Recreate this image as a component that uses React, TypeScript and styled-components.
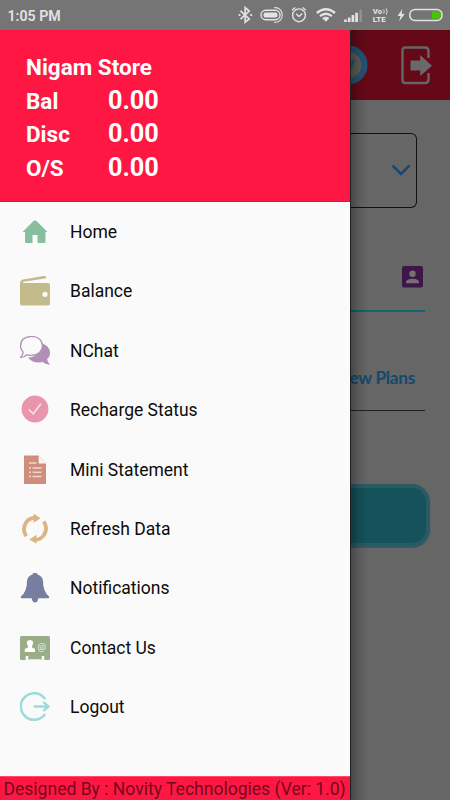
import React from "react";
import styled, { createGlobalStyle } from "styled-components";

const GlobalStyle = createGlobalStyle`
  * { box-sizing: border-box; }
  body { margin: 0; background: #666; font-family: Roboto, "Liberation Sans", sans-serif; }
  svg { display: block; flex: none; }
`;

const Screen = styled.div`
  width: 450px;
  height: 800px;
  overflow: hidden;
  display: grid;
  grid-template-rows: 30px 770px;
`;

const StatusBar = styled.header`
  display: flex;
  justify-content: space-between;
  background: #757575;
  color: #e3e3e3;
  padding-left: 7.5px;
`;

const Clock = styled.time`
  font-size: 14.2px;
  font-weight: 600;
  line-height: 32px;
`;

const Body = styled.div`
  display: grid;
  grid-template-columns: 350px 100px;
`;

const Drawer = styled.aside`
  display: flex;
  flex-direction: column;
  background: #fafafa;
`;

const Account = styled.section`
  height: 172px;
  padding: 20px 26px 0;
  background: #ff1744;
  border-bottom: 1px solid #f80e3c;
  color: #fff;
  font-weight: 700;
`;

const StoreName = styled.div`
  font-size: 22.5px;
  line-height: 34px;
  height: 33.5px;
  white-space: nowrap;
`;

const AmountRow = styled.div`
  display: grid;
  grid-template-columns: 82px 1fr;
  height: 33.5px;
  line-height: 34px;
  font-size: 22.5px;
`;

const Amount = styled.span`
  font-size: 25.3px;
  line-height: 33px;
`;

const Menu = styled.nav`
  flex: 1;
  padding-top: 0.4px;
`;

const MenuItem = styled.a`
  display: grid;
  grid-template-columns: 30px auto;
  column-gap: 20px;
  align-items: center;
  height: 59.4px;
  padding-left: 20px;
  font-size: 17.5px;
  color: #0c0c0c;
`;

const Footer = styled.footer`
  height: 24px;
  padding-left: 3.5px;
  background: #ff1744;
  border-top: 1px solid #ff4a68;
  color: #720a1e;
  font-size: 17.55px;
  line-height: 24px;
  white-space: nowrap;
`;

const Page = styled.main`
  position: relative;
  background: #666;
  overflow: hidden;
`;

const DrawerShadow = styled.div`
  position: absolute;
  inset: 0 auto 0 0;
  width: 18px;
  border-left: 1px solid #1d2326;
  background: linear-gradient(90deg, rgba(0,0,0,.3), rgba(0,0,0,.1) 50%, transparent);
`;

const AppBar = styled.div`
  height: 70px;
  background: #650918;
  display: flex;
  justify-content: space-between;
  align-items: center;
  padding-right: 18px;
`;

const SelectBox = styled.div`
  width: 67px;
  height: 75px;
  margin-top: 32.5px;
  padding-right: 5px;
  border: 1px solid #111;
  border-left: 0;
  border-radius: 0 6px 6px 0;
  display: flex;
  justify-content: flex-end;
  align-items: center;
`;

const NumberField = styled.div`
  width: 75px;
  height: 104.5px;
  padding: 58px 2px 0 0;
  border-bottom: 2px solid #0f666f;
  display: flex;
  justify-content: flex-end;
`;

const PlanField = styled.div`
  width: 75px;
  height: 99px;
  padding: 54px 10px 0 0;
  border-bottom: 1px solid #202020;
  display: flex;
  justify-content: flex-end;
  white-space: nowrap;
  font: 700 17.3px/24px Lato, sans-serif;
  color: #134a6b;
`;

const PlansLabel = styled.span`
  letter-spacing: -0.3px;
`;

const Submit = styled.div`
  width: 80px;
  height: 63px;
  margin-top: 73px;
  background: #15525a;
  border: 4px solid #295b67;
  border-left: 0;
  border-radius: 0 18px 18px 0;
  box-shadow: 0 1px 1px rgba(0,0,0,.2);
`;

const StatusIcons = () => (
  <svg width="220" height="30" viewBox="230 0 220 30" fill="none" stroke="#e3e3e3" strokeWidth="1.4">
    <path d="M240.500 10.800l8.700 8.200-4 3.300V7.600l4 3.400-8.700 8.200" strokeWidth="1.700" />
    <path d="M239.500 15h.1m11.500 0h.1" strokeWidth="2.200" strokeLinecap="round" />
    <rect x="261" y="10.300" width="19" height="9.400" rx="4.700" />
    <rect x="263.500" y="12.500" width="14" height="5" rx="2" fill="#e3e3e3" stroke="none" />
    <path d="M274 7.700c11-1.500 11 16.200 0 14.500" strokeWidth="1.100" />
    <circle cx="299" cy="15.300" r="6.400" />
    <path d="M296 13.700l3 2.800 3.200-3.100M292 10.300l3.300-2.800m7.300 0 3.300 2.800" />
    <g strokeWidth="2.300">
      <path d="M316.800 13q9.100-7.400 18.200 0" />
      <path d="M320 16.200q5.900-4.800 11.800 0" />
      <path d="M323 19q2.800-2 5.600 0" />
    </g>
    <circle cx="325.900" cy="20.100" r="1.400" fill="#e3e3e3" stroke="none" />
    <path d="M345.500 22v-2.500m3.700 2.500v-4.500m3.700 4.500v-7m3.700 7v-9.200" strokeWidth="2.700" />
    <path d="M360.700 22V9.500" strokeWidth="2.500" stroke="#929292" />
    <g fill="#e3e3e3" stroke="none" fontFamily="Roboto, sans-serif" fontWeight="800">
      <text x="372.700" y="14" fontSize="7.900" letterSpacing=".1">Vo</text>
      <text x="372.700" y="22" fontSize="7.900" letterSpacing=".1">LTE</text>
    </g>
    <path d="M383.700 9.500q1.200 2 0 4m2.500-5q2 3 0 6" strokeWidth="1" />
    <path d="M402.400 9l-4.900 7h3l-1.300 5.600 5.500-7.800h-3.100z" fill="#e3e3e3" stroke="none" />
    <path d="M432 11.300h6.500q2.400 0 2.400 3.700t-2.400 3.700H432z" fill="#46c404" stroke="none" />
    <rect x="409.800" y="9.600" width="32.200" height="10.800" rx="5" strokeWidth="1.500" />
  </svg>
);

const HomeIcon = () => (
  <svg width="30" height="30" viewBox="0 0 30 30" fill="#88bd9e">
    <path d="M15 3.400Q16 3.400 17 4.500L27.500 15H25.500v9.500q0 1.500-1.500 1.500H17.500v-8h-5v8H6.500Q5 26 5 24.500V15H2.500L13 4.500Q14 3.400 15 3.400z" />
  </svg>
);

const WalletIcon = () => (
  <svg width="30" height="30" viewBox="0 0 30 30" fill="#c3bb8b">
    <path d="M0 8Q0 4.200 3 3.500L24.500-.2Q26-.2 26.200 2.200L4 5.800Q2.300 6.300 3 7H28q2 0 2 2v18.500q0 2-2 2H2q-2 0-2-2z" />
    <circle cx="25" cy="18.300" r="2.600" fill="#fafafa" />
  </svg>
);

const ChatIcon = () => (
  <svg width="30" height="30" viewBox="0 0 30 30">
    <path d="M22 7.500q8 2.500 8 9.500 0 4-3 6 .3 3 3 5.300-4 .7-7.300-2.200Q13 28 8 21.500 20 21 22 7.500z" fill="#b28fb6" />
    <path d="M10.500.5C26.500-.5 26.500 20 10.500 19.300q-2 0-3.700-.6-3 2.900-6.300 2.700 2.300-2.300 2.700-5.300Q.5 13.500.5 10 .5 1.200 10.500.5z" fill="#fafafa" stroke="#b28fb6" strokeWidth="1.300" />
  </svg>
);

const CheckIcon = () => (
  <svg width="30" height="30" viewBox="0 0 30 30">
    <circle cx="15" cy="14" r="13.400" fill="#e995ad" />
    <path d="M8.800 14.500l4.400 4.300 7.700-10" fill="none" stroke="#fbe3ea" strokeWidth="1.500" />
  </svg>
);

const StatementIcon = () => (
  <svg width="30" height="30" viewBox="0 0 30 30">
    <path d="M4 .5h14.500l7.500 8V29H4z" fill="#cf8d7e" />
    <path d="M18.700.7V8.500H26z" fill="#fff3f0" />
    <path d="M9 8h7.500M9 13h2m1.500 0h9M9 17.200h2m1.500 0h9M9 21.500h2m1.500 0h9" stroke="#f2d4cc" strokeWidth="1.600" />
  </svg>
);

const RefreshIcon = () => (
  <svg width="30" height="30" viewBox="0 0 30 30" fill="none" stroke="#dcb385" strokeWidth="3.800">
    <path d="M6.300 22.200Q1.600 15.500 6.200 8.200 9.700 3.800 15 3.900M23.700 7.500Q28.400 14 24 21q-3.500 4.800-9 4.800" />
    <path d="M13.500-.5l7.200 4.800-7.200 4.400zM16.500 20.800l-7.200 4.800 7.200 4.200z" fill="#dcb385" stroke="none" />
  </svg>
);

const BellIcon = () => (
  <svg width="30" height="30" viewBox="0 0 30 30" fill="#777e9f">
    <path d="M12.500 1.500Q13-.3 15-.3t2.500 1.800q5 1.500 5.500 6.500 0 10.500 6 15.500.5 1.800-.5 1.800H18.200q-.5 4.300-3.200 4.300t-3.200-4.300H1.500q-1 0-.5-1.800Q7 18.500 7 8q.5-5 5.500-6.500z" />
  </svg>
);

const ContactIcon = () => (
  <svg width="30" height="30" viewBox="0 0 30 30">
    <rect y="3" width="30" height="24" rx="1.500" fill="#9aad87" />
    <path d="M10 7c3.300 0 3.500 3 2.600 5q-.8 1.200-.8 2.300l3.200 1.600V19H4.800v-3.100L8.200 14.300q0-1.100-.8-2.300C6.400 10 6.700 7 10 7z" fill="#fff" />
    <text x="17.500" y="16.600" fontFamily="Roboto, sans-serif" fontSize="9.500" fill="#edf2e6">@</text>
    <path d="M7 23v4m16-4v4" stroke="#fff" strokeWidth="2.600" />
    <path d="M9 26.500h12" stroke="#dfe6d8" strokeWidth="1" />
  </svg>
);

const LogoutIcon = () => (
  <svg width="30" height="30" viewBox="0 0 30 30" fill="none" stroke="#9bdcdb" strokeWidth="2.500" strokeLinecap="round">
    <path d="M24.500 6.200A13.300 13.300 0 1 0 24.500 22.800" />
    <path d="M14.500 14.500H28m-4-3.800 4.400 3.800-4.400 3.800" strokeWidth="2.300" />
  </svg>
);

const VerifiedIcon = () => (
  <svg width="19" height="42" viewBox="0 0 19 42">
    <circle cx="-2" cy="21" r="16.500" fill="#5d5d59" stroke="#255475" strokeWidth="6" />
    <path d="M-5 21l4 5L4 16" fill="none" stroke="#255475" strokeWidth="3" />
  </svg>
);

const ExitIcon = () => (
  <svg width="32" height="40" viewBox="0 0 32 40">
    <path d="M28.500 13V6q0-3.500-3.500-3.500H5Q2.500 2.500 2.500 6v29q0 3 2.500 3h20q3.500 0 3.500-3.500V28" fill="none" stroke="#666" strokeWidth="2.400" />
    <path d="M10.500 15.500h9.700V10L32 20.700 20.200 31v-5.500h-9.700z" fill="#696969" />
  </svg>
);

const items = [
  { label: "Home", Icon: HomeIcon },
  { label: "Balance", Icon: WalletIcon },
  { label: "NChat", Icon: ChatIcon },
  { label: "Recharge Status", Icon: CheckIcon },
  { label: "Mini Statement", Icon: StatementIcon },
  { label: "Refresh Data", Icon: RefreshIcon },
  { label: "Notifications", Icon: BellIcon },
  { label: "Contact Us", Icon: ContactIcon },
  { label: "Logout", Icon: LogoutIcon },
];

export default function App() {
  return (
    <Screen>
      <GlobalStyle />
      <StatusBar>
        <Clock>1:05 PM</Clock>
        <StatusIcons />
      </StatusBar>
      <Body>
        <Drawer>
          <Account>
            <StoreName>Nigam Store</StoreName>
            {["Bal", "Disc", "O/S"].map((name) => (
              <AmountRow key={name}>
                <span>{name}</span>
                <Amount>0.00</Amount>
              </AmountRow>
            ))}
          </Account>
          <Menu>
            {items.map(({ label, Icon }) => (
              <MenuItem key={label}>
                <Icon />
                <span>{label}</span>
              </MenuItem>
            ))}
          </Menu>
          <Footer>Designed By : Novity Technologies (Ver: 1.0)</Footer>
        </Drawer>
        <Page>
          <AppBar>
            <VerifiedIcon />
            <ExitIcon />
          </AppBar>
          <SelectBox>
            <svg width="20" height="14" viewBox="0 0 20 14" fill="none" stroke="#17486f" strokeWidth="2.500">
              <path d="M1.500 2.500l8.500 8.500L18.500 2.500" />
            </svg>
          </SelectBox>
          <NumberField>
            <svg width="21" height="22" viewBox="0 0 21 22">
              <rect width="21" height="21.500" rx="2" fill="#3e1748" />
              <circle cx="10.500" cy="7.800" r="3.200" fill="#747074" />
              <path d="M4 17.200v-1.500q1-2.800 6.500-2.900 5.500.1 6.500 2.900v1.500z" fill="#747074" />
            </svg>
          </NumberField>
          <PlanField>
            <PlansLabel>ew Plans</PlansLabel>
          </PlanField>
          <Submit />
          <DrawerShadow />
        </Page>
      </Body>
    </Screen>
  );
}
